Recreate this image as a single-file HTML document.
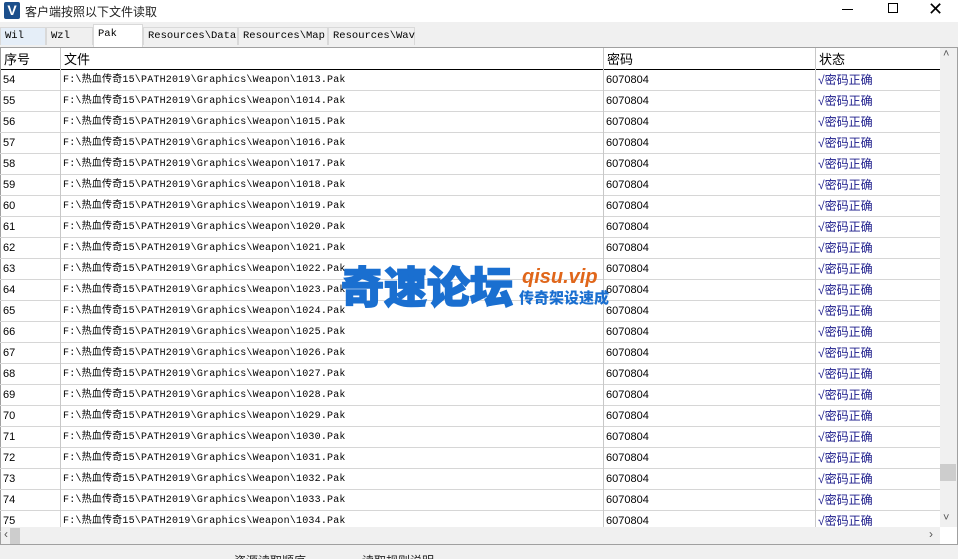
<!DOCTYPE html>
<html><head><meta charset="utf-8"><style>
*{margin:0;padding:0;box-sizing:border-box}
html,body{width:958px;height:559px;overflow:hidden}
body{background:#f0f0f0;font-family:"Liberation Sans","Noto Sans CJK SC",sans-serif;font-size:12px;position:relative}
.abs{position:absolute}
#title{left:0;top:0;width:958px;height:22px;background:#fff}
.tab{position:absolute;top:27px;height:18px;border:1px solid #d9d9d9;border-bottom:none;font-family:"Liberation Mono","Noto Sans CJK SC",monospace;font-size:10.5px;line-height:17px;padding:0 0 0 4px;color:#000;background:#f0f0f0}
#grid{left:0;top:47px;width:958px;height:498px;background:#fff;border:1px solid #a0a0a0}
.hdr{position:absolute;top:48px;height:22px;border-bottom:1px solid #000;background:#fff;font-size:13px;padding:1px 0 0 3px}
.row{position:absolute;left:0;width:940px;height:21px;border-bottom:1px solid #d6d6d6;font-size:11px;line-height:20px}
.row span{position:absolute;top:0}
.c1{left:3px}
.c2{left:63px;font-family:"Liberation Mono","Noto Sans CJK SC",monospace;font-size:10px;letter-spacing:0.2px;top:1px!important}
.c3{left:606px}
.c4{left:818px;color:#1a1a8a;font-size:12px}
.vl{position:absolute;top:48px;width:1px;height:479px;background:#c8c8c8}
</style></head><body>
<div class="abs" id="title">
 <div class="abs" style="left:4px;top:2px;width:16px;height:17px;background:#1b4f8c;color:#fff;font-weight:bold;font-size:14px;text-align:center;line-height:17px;border-radius:2px">V</div>
 <div class="abs" style="left:25px;top:3px;font-size:12px;color:#222">客户端按照以下文件读取</div>
 <div class="abs" style="left:842px;top:9px;width:11px;height:1px;background:#000"></div>
 <div class="abs" style="left:888px;top:3px;width:10px;height:10px;border:1px solid #000"></div>
 <div class="abs" style="left:928px;top:-1px;font-size:18px;font-weight:300">✕</div>
</div>
<div class="tab" style="left:0;width:46px;background:#e5eef8">Wil</div>
<div class="tab" style="left:46px;width:47px">Wzl</div>
<div class="tab" style="left:93px;width:50px;top:24px;height:23px;background:#fff;line-height:18px">Pak</div>
<div class="tab" style="left:143px;width:95px">Resources\Data</div>
<div class="tab" style="left:238px;width:90px">Resources\Map</div>
<div class="tab" style="left:328px;width:87px">Resources\Wav</div>
<div class="abs" id="grid"></div>
<div class="hdr" style="left:1px;width:59px">序号</div>
<div class="hdr" style="left:60px;width:543px;border-left:1px solid #888">文件</div>
<div class="hdr" style="left:603px;width:212px;border-left:1px solid #888">密码</div>
<div class="hdr" style="left:815px;width:125px;border-left:1px solid #888">状态</div>
<div id="rows"></div>
<div class="vl" style="left:60px"></div><div class="vl" style="left:603px"></div><div class="vl" style="left:815px"></div>
<div class="abs" style="left:940px;top:48px;width:17px;height:479px;background:#f0f0f0"></div>
<div class="abs" style="left:943px;top:48px;font-size:11px;color:#555">˄</div>
<div class="abs" style="left:943px;top:512px;font-size:11px;color:#555">˅</div>
<div class="abs" style="left:940px;top:464px;width:16px;height:17px;background:#cdcdcd"></div>
<div class="abs" style="left:1px;top:527px;width:939px;height:17px;background:#f0f0f0"></div>
<div class="abs" style="left:4px;top:527px;font-size:12px;color:#555">‹</div>
<div class="abs" style="left:10px;top:528px;width:10px;height:16px;background:#cdcdcd"></div>
<div class="abs" style="left:929px;top:527px;font-size:12px;color:#555">›</div>
<div class="abs" style="left:234px;top:552px;font-size:12px;color:#222">资源读取顺序</div>
<div class="abs" style="left:362px;top:552px;font-size:12px;color:#222">读取规则说明</div>
<div class="abs" style="left:341px;top:260px;font-size:43px;font-weight:900;color:#1a6fd0;letter-spacing:0;font-family:'Noto Sans CJK SC',sans-serif;line-height:50px;-webkit-text-stroke:1.5px #1a6fd0">奇速论坛</div>
<div class="abs" style="left:522px;top:266px;font-size:20px;font-weight:bold;font-style:italic;color:#e0661a;font-family:'Liberation Sans',sans-serif">qisu.vip</div>
<div class="abs" style="left:519px;top:289px;font-size:15px;font-weight:900;color:#1a6fd0;font-family:'Noto Sans CJK SC',sans-serif;line-height:18px">传奇架设速成</div>
<script>
var h='';
for(var i=0;i<22;i++){var n=54+i;h+='<div class="row" style="top:'+(70+i*21)+'px"><span class="c1">'+n+'</span><span class="c2">F:\\热血传奇15\\PATH2019\\Graphics\\Weapon\\'+(1013+i)+'.Pak</span><span class="c3">6070804</span><span class="c4">√密码正确</span></div>';}
document.getElementById('rows').innerHTML=h;
</script>
</body></html>
